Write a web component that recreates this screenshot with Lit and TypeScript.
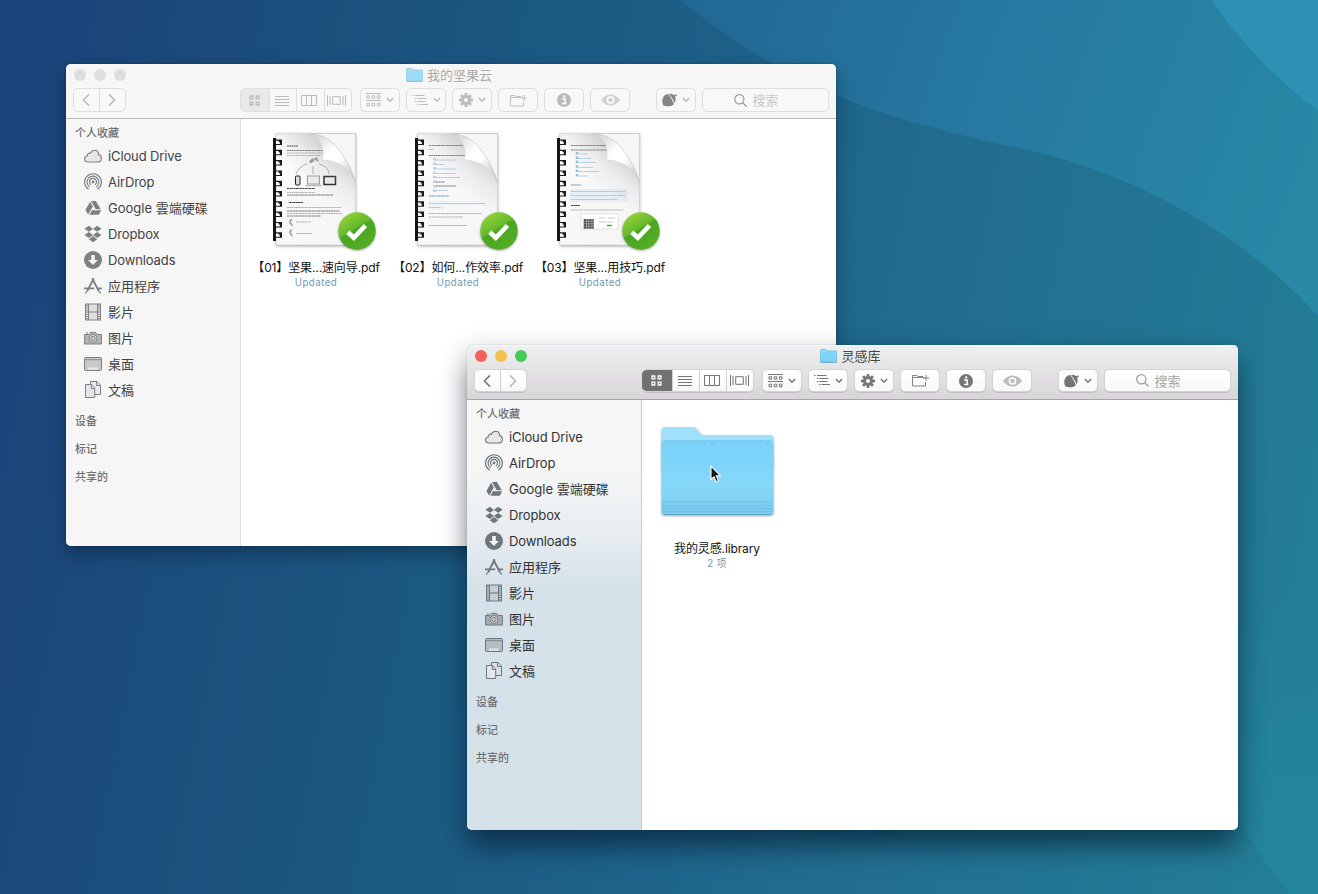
import { LitElement, html, svg, css, nothing } from "lit";
import { customElement, property } from "lit/decorators.js";
import { classMap } from "lit/directives/class-map.js";

/* ---------- toolbar glyphs ---------- */

const chevron = html`<svg width="8" height="6" viewBox="0 0 8 6"><path d="M.9 1 4 4.2 7.1 1" fill="none" stroke="currentColor" stroke-width="1.5"/></svg>`;

const glyphs = {
  back: html`<svg width="8" height="14" viewBox="0 0 8 14"><path d="M7 1.4 1.4 7 7 12.6" fill="none" stroke="currentColor" stroke-width="1.5"/></svg>`,
  forward: html`<svg width="8" height="14" viewBox="0 0 8 14"><path d="M1 1.4 6.6 7 1 12.6" fill="none" stroke="currentColor" stroke-width="1.5"/></svg>`,
  grid: html`<svg width="11" height="11" viewBox="0 0 11 11"><path d="M1 1h2.8v2.8H1zM7.2 1H10v2.8H7.2zM1 7.2h2.8V10H1zM7.2 7.2H10V10H7.2z" fill="none" stroke="currentColor" stroke-width="1.3"/></svg>`,
  list: html`<svg width="14" height="11" viewBox="0 0 14 11"><path d="M0 1.500h14M0 4.500h14M0 7.500h14M0 10.500h14" stroke="currentColor"/></svg>`,
  columns: html`<svg width="16" height="11" viewBox="0 0 16 11"><path d="M.5.5h15v10H.5zM5.5.5v10M10.5.5v10" fill="none" stroke="currentColor"/></svg>`,
  flow: html`<svg width="19" height="11" viewBox="0 0 19 11"><path d="M.5 0v11M3 1v9M5.7 1.7h7.6v7.6H5.7zM16 1v9M18.5 0v11" fill="none" stroke="currentColor"/></svg>`,
  arrange: html`<svg width="15" height="14" viewBox="0 0 15 14"><path d="M0 .5h15M0 7.5h15M1 2.8h2.6v2.4H1zM6.2 2.8h2.6v2.4H6.2zM11.4 2.8H14v2.4h-2.6zM1 10.2h2.6v2.6H1zM6.2 10.2h2.6v2.6H6.2zM11.4 10.2H14v2.6h-2.6z" fill="none" stroke="currentColor"/></svg>`,
  outline: html`<svg width="16" height="11" viewBox="0 0 16 11"><path d="M0 .5h1.5M3 .5h9.5M3 3.5h1.5M5.5 3.5h9M3 6.5h1.5M5.5 6.5h8M5 9.5h1.5M7.5 9.5H16" stroke="currentColor"/></svg>`,
  gear: html`<svg width="14" height="14" viewBox="-7 -7 14 14"><g fill="currentColor">${[0, 45, 90, 135].map(
    (a) => svg`<rect x="-1.4" y="-7" width="2.8" height="14" rx=".5" transform="rotate(${a})"/>`,
  )}</g><circle r="3.5" fill="none" stroke="currentColor" stroke-width="2.6"/><circle class="hub" r="2"/></svg>`,
  folder: html`<svg width="17" height="13" viewBox="0 0 17 13"><path d="M12 3.5H.5v8.500h13V8M.5 3.500V1.500h4.200l1.300 1h5M14 1v6M11 4h6" fill="none" stroke="currentColor" stroke-width=".9"/></svg>`,
  info: html`<svg width="14" height="14" viewBox="0 0 14 14"><circle cx="7" cy="7" r="7" fill="currentColor"/><path d="M5.100 6h3v4.200M5 10.400h4.300" fill="none" stroke="#fff" stroke-width="1.500"/><circle cx="7.200" cy="3.500" r="1.150" fill="#fff"/></svg>`,
  eye: html`<svg width="19" height="12" viewBox="0 0 19 12"><path d="M0 6Q4 .5 9.500 .5T19 6Q15 11.500 9.500 11.500T0 6z" fill="currentColor"/><circle cx="9.500" cy="6" r="3.100" fill="none" stroke="#fff" stroke-width="1.500"/></svg>`,
  acorn: html`<svg width="15" height="14" viewBox="0 0 15 14"><path d="M1.400 12.600C-1 8 .6 1.600 6 1.100 8.500 4.200 10.700 7.500 11.900 11.200 9 13.600 4.600 13.900 1.400 12.600z" fill="currentColor"/><path d="M6.900 1C8.700.3 10.400.7 11.500 1.900L14.600 1.500V3.100L13.100 3.600C14 6 13.700 8.400 12.600 10.300 11.400 6.800 9.500 3.800 6.900 1z" fill="currentColor"/></svg>`,
  search: html`<svg width="13" height="13" viewBox="0 0 13 13"><circle cx="5.300" cy="5.300" r="4.600" fill="none" stroke="currentColor" stroke-width="1.200"/><path d="M8.600 8.600 12.500 12.500" stroke="currentColor" stroke-width="1.300"/></svg>`,
};

const titleFolder = html`<svg width="17" height="14" viewBox="0 0 17 14"><path d="M.5 1.200Q.5.500 1.200.500H5.500L7 2h9q.5 0 .5.700V13H.5z" fill="#8fd8f7" stroke="#6dbbe0" stroke-width=".8"/><path d="M.9 3.500h15.200v9.300H.9z" fill="#7fd3f8"/><path d="M.5 13.300h16" stroke="#5d9fc4" stroke-width=".9"/></svg>`;

/* ---------- sidebar glyphs ---------- */

const places = [
  {
    label: "iCloud Drive",
    icon: svg`<path d="M4.300 15C2 15 .6 13.700.6 12S1.700 9.300 3.100 9C3 6.900 4.800 5.700 6.400 6.300 7 4.200 8.700 3.200 10.500 3.200c2.600 0 4.100 2 4.100 4.400C16.500 8 17.400 9.600 17.400 11.400c0 2.100-1.500 3.600-3.600 3.600z" fill="#8882" stroke="currentColor" stroke-width="1.100"/>`,
  },
  {
    label: "AirDrop",
    icon: svg`<g fill="none" stroke="currentColor" stroke-width="1.200"><path d="M4.600 16.300a8.400 8.400 0 1 1 8.800 0"/><path d="M5.700 13.900a5.900 5.900 0 1 1 6.600 0"/><path d="M7 11.700a3.500 3.500 0 1 1 4 0"/></g><circle cx="9" cy="9" r="1.400" fill="currentColor"/>`,
  },
  {
    label: "Google 雲端硬碟",
    icon: svg`<g fill="currentColor"><path d="M6.100 2.700 8.800 7.400 4.200 15.400 1.400 10.900z"/><path d="M7 2h5l4.700 8.300H11.700z"/><path d="M7.900 11.300h9.300l-2.500 4.500H5.300z"/></g>`,
  },
  {
    label: "Dropbox",
    icon: svg`<path d="M4.900.800.4 3.800 4.900 6.800 9 3.900zM13.100.800 9 3.900 13.100 6.800 17.600 3.800zM4.900 6.900.4 9.900 4.900 12.900 9 9.900zM13.100 6.900 9 9.900 13.100 12.900 17.600 9.900zM9 11 4.700 14.200 9 17.200 13.300 14.200z" fill="currentColor"/>`,
  },
  {
    label: "Downloads",
    icon: svg`<circle cx="9" cy="9" r="9" fill="currentColor"/><path d="M7.200 4h3.600v5h3.100L9 14 4.100 9h3.100z" fill="#f6f6f6"/>`,
  },
  {
    label: "应用程序",
    icon: svg`<g fill="none" stroke="currentColor"><path d="M9.700 1.500 3 14.500M8.300 1.500 15 14.500" stroke-width="1.800"/><path d="M0 11.300h10.200M13 11.300h5" stroke-width="1.700"/><path d="M2.500 14.500 1.300 16.500M15.500 14.500 16.700 16.500" stroke-width="1.400"/></g>`,
  },
  {
    label: "影片",
    icon: svg`<rect x="1.500" y="1" width="15" height="16" fill="#8883" stroke="currentColor"/><path d="M4.500 1v16M13.500 1v16M4.500 9h9" stroke="currentColor"/><path d="M3 2v15M15 2v15" stroke="currentColor" stroke-width="1.600" stroke-dasharray="1 1.200"/>`,
  },
  {
    label: "图片",
    icon: svg`<path d="M.6 5.500h4.200L6.500 3.400h5l1.700 2.100h4.200V15H.6z" fill="#8889" stroke="currentColor"/><path d="M2 4h2" stroke="currentColor"/><circle cx="9" cy="9.500" r="4" fill="#e4e6e8" stroke="currentColor"/><circle cx="9" cy="9.500" r="2.200" fill="#aaa8" stroke="currentColor" stroke-width=".9"/>`,
  },
  {
    label: "桌面",
    icon: svg`<rect x=".5" y="2.500" width="17" height="13" rx="1" fill="#8886" stroke="currentColor"/><path d="M1 4.700h16" stroke="currentColor" stroke-width=".8"/><path d="M4.300 13.700h9.400" stroke="#f5f6f7" stroke-width="2.200" stroke-dasharray="1.700 .7"/>`,
  },
  {
    label: "文稿",
    icon: svg`<g fill="#ddd8" stroke="currentColor"><path d="M6.500.500h6.700l3.300 3.600V13.500h-10z"/><path d="M12.500.500v4h4"/><path d="M1.500 3.500h6l3.200 3.600V16.500H1.500z" fill="#e4e7e9"/><path d="M7.300 3.500v4h3.400"/></g>`,
  },
];

const sections = ["设备", "标记", "共享的"];

/* Han glyphs sit lower in the line box than Latin ones */
const hasHan = (text: string) => /[\u4e00-\u9fff]/.test(text);

/* ---------- document thumbnails ---------- */

type Line = [x: number, y: number, w: number, tone?: string];

const ink = "#666";
const blue = "#9dc3df";

const pages: Record<string, { lines: Line[]; extra: unknown }> = {
  guide: {
    lines: [
      [31, 18, 11, "#222"], [73, 18, 15], [31, 22.500, 36, ink], [31, 25, 52], [31, 27.500, 34],
      [31, 60.500, 28, "#333"], [31, 64.500, 28], [31, 67, 46, ink], [33, 74.500, 14, "#222"],
      [31, 79.500, 54], [31, 83, 53, ink], [31, 85.500, 55], [31, 88, 34, ink],
      [40, 94, 15], [40, 105.500, 16],
    ],
    extra: svg`
      <path d="m53 33 4-3 1.500 3-4 2.500zM57 31l4-2 2 5" fill="#999"/>
      <g fill="none" stroke="#999" stroke-width=".8"><path d="M51 36Q43 38 40 46M57 38v8M63 36q9 2 10 10"/></g>
      <rect x="39.500" y="48" width="4.500" height="9" rx="1" fill="#ddd" stroke="#222"/>
      <rect x="51.500" y="48" width="12" height="8" fill="#eee" stroke="#999"/><path d="M49.500 57.500h16" stroke="#bbb" stroke-width="1.500"/>
      <rect x="68" y="48.500" width="11.500" height="8" fill="#eee" stroke="#222" stroke-width="1.500"/>
      <path d="M36 91.500q-3 1-1.500 3.500t2 2.500M36 102q-3 1-1.500 3.500t2 2.500" fill="none" stroke="#999" stroke-width="1.500"/>`,
  },
  team: {
    lines: [
      [31, 17.500, 34, ink], [31, 21.500, 4], [31, 27.500, 36, ink],
      [38, 32, 20, blue], [38, 36.500, 9, blue], [38, 41, 20, blue], [38, 45.500, 19, blue], [38, 49.500, 24, blue],
      [38, 54, 9, ink], [38, 58, 20, ink], [38, 62.500, 12, blue],
      [31, 68, 20, "#5592bf"], [31, 75.500, 56, blue], [31, 79.500, 12, blue],
      [31, 85.500, 53], [31, 89, 34], [31, 97.500, 38],
    ],
    extra: svg`<path d="M36.500 30v34" stroke="#b9d5e8" stroke-width="3" stroke-dasharray="2.500 2"/><path d="M30 73h58v4H46v5H30z" fill="#d7e8f344"/><rect x="72" y="18" width="6" height="8" fill="none" stroke="#aaa"/>`,
  },
  tips: {
    lines: [
      [31, 17.500, 38, ink], [31, 22, 42, ink],
      [39, 26, 9, blue], [39, 30.500, 12, blue], [39, 34.500, 17, blue], [39, 39.500, 14, blue], [39, 43.500, 20, blue], [39, 48, 9, blue],
      [31, 57, 10, "#4d8fbd"], [31, 63.500, 54, blue], [31, 67.500, 54, blue], [31, 71.500, 46, blue],
      [31, 77.500, 9, "#222"], [31, 82, 52],
    ],
    extra: svg`
      <path d="M37 24v26" stroke="#8ebbdc" stroke-width="2.500" stroke-dasharray="2.500 1.900"/>
      <rect x="29.500" y="61" width="58" height="13" fill="#cfe3f166"/>
      <rect x="41" y="86" width="37" height="15" fill="#fff" stroke="#ddd" stroke-width=".8"/>
      <rect x="43.500" y="91" width="10.500" height="10" fill="#999"/>
      <path d="M44 92h10M44 94.500h10M44 97h10M44 99.500h10" stroke="#444" stroke-width="1.500" stroke-dasharray="2 1 1 1.300"/>
      <path d="M59 90h6M59 94h8M68 90h7M68 94h5" stroke="#bbb" stroke-width=".8"/><path d="M67 97.500h5" stroke="#54a53c" stroke-width="1.500"/>`,
  },
};

const documentArt = (kind: string) => html`<svg class="art" width="120" height="124" viewBox="0 0 120 124">
  <defs>
    <linearGradient id="paper" x1="0" y1="0" x2="1" y2="1"><stop offset="0" stop-color="#fff"/><stop offset=".45" stop-color="#f7f7f7"/><stop offset="1" stop-color="#f5f5f5"/></linearGradient>
    <linearGradient id="shade" gradientUnits="userSpaceOnUse" x1="56" y1="58" x2="79" y2="28"><stop offset="0" stop-color="#bbb" stop-opacity="0"/><stop offset=".5" stop-color="#bbb" stop-opacity=".3"/><stop offset="1" stop-color="#999" stop-opacity=".7"/></linearGradient>
    <linearGradient id="curl" gradientUnits="userSpaceOnUse" x1="54" y1="6" x2="99" y2="54"><stop offset="0" stop-color="#ccc"/><stop offset=".3" stop-color="#f2f2f2"/><stop offset=".42" stop-color="#fff"/><stop offset=".58" stop-color="#fff"/><stop offset=".78" stop-color="#dedede"/><stop offset="1" stop-color="#c4c4c4"/></linearGradient>
    <linearGradient id="go" x1="0" y1="0" x2=".6" y2="1"><stop offset="0" stop-color="#a3d93c"/><stop offset=".5" stop-color="#66b92c"/><stop offset=".55" stop-color="#4ba522"/><stop offset="1" stop-color="#55ad25"/></linearGradient>
  </defs>
  <path class="sheet" d="M20 5.500H99.500V117H20z" fill="url(#paper)" stroke="#ccc" stroke-width=".6"/>
  ${pages[kind].extra}
  ${pages[kind].lines.map(([x, y, w, tone]) => svg`<path d="M${x} ${y}h${w}" stroke=${tone ?? "#aaa"} stroke-width=".9" stroke-dasharray="2.200 .4 1.500 .3"/>`)}
  <path d="M20 6H99V116H20z" fill="url(#shade)" opacity=".55"/>
  <path d="M53 5.800C66 6 76 12 83 22 91 33 97 43 99.300 55V5.800z" fill="#f6f6f6"/>
  <path d="M53 5.800C63 8 69 17 67 31.500 81 32 94 40 99.300 55 97 43 91 33 83 22 76 12 66 6 53 5.800z" fill="url(#curl)"/>
  <path d="M53 5.800C66 6 76 12 83 22 91 33 97 43 99.300 55" fill="none" stroke="#c2c2c2" stroke-width=".6"/>
  <path d="M53 5.500H99.500V56" fill="none" stroke="#ccc" stroke-width=".8"/>
  <path d="M17 10h3v103h-3z" fill="#151515"/>
  ${Array.from({ length: 10 }, (_, i) => svg`<g transform="translate(20 ${11.500 + i * 10.300})"><path d="M0 0h6v5.500H0z" fill="#1b1b1b"/><path d="M0 1.200h2.600v1.300h1.200v2H0z" fill="#fff"/></g>`)}
  <g class="badge"><circle cx="101" cy="103" r="18.700" fill="url(#go)"/><path d="M91.800 104.300 97.800 109.800 109.500 97.500" fill="none" stroke="#fff" stroke-width="4.600"/></g>
</svg>`;

const folderArt = html`<svg class="art" width="120" height="124" viewBox="0 0 120 124">
  <defs><linearGradient id="front" x1="0" y1="0" x2="0" y2="1"><stop offset="0" stop-color="#7bd2f9"/><stop offset=".3" stop-color="#7dd4f9"/><stop offset=".6" stop-color="#88d8f9"/><stop offset="1" stop-color="#7ccbef"/></linearGradient></defs>
  <g class="badge"><path d="M4.500 22q0-4 4-4H36q2.500 0 4 2l3.500 4.500q1.500 1.500 4 1.500H113q3.500 0 3.500 3.500V60H4.500z" fill="#a0e0fc"/>
  <path d="M4.500 34q0-2.500 2.500-2.500H114q2.500 0 2.500 2.500v68.500q0 3.500-3.500 3.500H8q-3.500 0-3.500-3.500z" fill="url(#front)"/></g>
  <path d="M7 32h107" stroke="#68bde5" stroke-width=".7"/><path d="M46 35h3M54 35h4M109 35h3" stroke="#5cafdb" stroke-width=".6"/>
  <path d="M5 93h111M5 96.500h111M5 99.500h111M5 102.500h111" stroke="#67bce3" stroke-width=".7"/><path d="M7 105.500h107" stroke="#60a9ca"/>
</svg>`;

interface Item {
  kind: string;
  name: string;
  note: string;
}

@customElement("finder-window")
class FinderWindow extends LitElement {
  @property() heading = "";
  @property({ type: Boolean, reflect: true }) active = false;
  @property({ attribute: false }) items: Item[] = [];

  static styles = css`
    :host {
      display: flex;
      flex-direction: column;
      box-sizing: border-box;
      overflow: hidden;
      border-radius: 5px;
      background: #fff;
      font-family: Inter, "Noto Sans CJK SC", sans-serif;
      box-shadow: 0 8px 18px rgba(0, 20, 40, 0.4), 0 0 2px rgba(0, 0, 0, 0.35);
      --glyph: #bbb;
      --edge: #dedede;
      --key: #f8f8f8;
    }
    :host([active]) {
      box-shadow: 0 20px 26px -3px rgba(0, 20, 35, 0.5), 0 6px 28px rgba(0, 20, 35, 0.2), 0 0 1px rgba(0, 0, 0, 0.45);
      --glyph: #757575;
      --edge: #d0d0d0;
      --key: #fdfdfd;
    }
    svg { display: block; flex: none; }
    .hub { fill: var(--key); }
    .chrome {
      flex: none;
      height: 55px;
      box-sizing: border-box;
      background: #f6f6f6;
      border-bottom: 1px solid #b9b9b9;
    }
    :host([active]) .chrome {
      background: linear-gradient(#eef0f2, #e9e8e9 28%, #d8d6d8);
      border-bottom-color: #a5a5a5;
      box-shadow: inset 0 1px #f8f8f8;
    }
    .titlebar {
      display: grid;
      grid-template-columns: 1fr auto 1fr;
      align-items: center;
      height: 22px;
      margin-bottom: 2px;
      padding: 0 12px 0 8px;
    }
    .lights { display: flex; gap: 8px; }
    .light { width: 12px; height: 12px; border-radius: 50%; background: #dedede; }
    :host([active]) .close { background: #f2605b; }
    :host([active]) .min { background: #f5bf4f; }
    :host([active]) .max { background: #46c95a; }
    .title { display: flex; align-items: center; gap: 4px; font-size: 13px; line-height: 20px; color: #aaa; }
    :host([active]) .title { color: #444; }
    :host(:not([active])) .title svg { opacity: 0.75; }
    .tools { display: flex; height: 24px; padding: 0 7px; }
    .key, .search, .group {
      box-sizing: border-box;
      display: flex;
      align-items: center;
      justify-content: center;
      height: 24px;
      border: 1px solid var(--edge);
      border-radius: 5px;
      background: var(--key);
      color: var(--glyph);
    }
    :host([active]) .key, :host([active]) .search, :host([active]) .group {
      background: linear-gradient(#fff, #f8f8f8);
      box-shadow: 0 1px #c1bfc1;
      border-color: #d4d2d4;
      height: 23px;
    }
    .group { overflow: hidden; }
    .cell { flex: 1; box-sizing: border-box; height: 100%; padding-right: 2px; display: flex; align-items: center; justify-content: center; border-left: 1px solid var(--edge); }
    .cell:first-child { border-left: 0; }
    .nav { width: 53px; margin-right: 114px; }
    :host([active]) .nav { margin-right: 115px; }
    .off { opacity: 0.5; }
    :host(:not([active])) .off { opacity: 1; }
    .views { width: 112px; margin-right: 8px; }
    .views .on { flex: none; width: 28px; background: #e9e9e9; padding-right: 1px; }
    :host([active]) .views { border-left: 0; }
    :host([active]) .views .on { width: 30px; height: 24px; background: #717171; color: #fff; }
    .key { width: 40px; margin-right: 6px; gap: 5px; }
    .acorn { margin-left: 20px; }
    :host(:not([active])) .acorn svg:first-child { color: #858585; }
    .key.eye { color: #bdbdbd; }
    :host(:not([active])) .key.eye { color: #d2d2d2; }
    .search { width: 127px; gap: 5px; font-size: 13px; line-height: 20px; color: #c9c9c9; padding-right: 18px; }
    :host([active]) .search { color: #a5a5a5; }
    .search svg { color: #999; }
    .body { flex: 1; min-height: 0; display: flex; }
    .side {
      flex: none;
      width: 175px;
      box-sizing: border-box;
      padding-top: 4px;
      background: #f6f6f6;
      border-right: 1px solid #dcdcdc;
      color: #444;
    }
    :host([active]) .side {
      background: linear-gradient(#f6f6f6 16%, #e9eef1 30%, #d6e2ea 43%, #d5e1e9);
      border-right-color: #c3cdd3;
      color: #333;
    }
    .head { padding-left: 9px; font-size: 11px; font-weight: 500; line-height: 28px; color: #6d6f70; }
    .first { line-height: 20px; }
    .more { padding-top: 4px; }
    .place { display: flex; align-items: center; gap: 6px; height: 26px; padding-left: 18px; font-size: 13px; letter-spacing: -0.12px; white-space: nowrap; }
    .han { margin-top: -2px; letter-spacing: 0; }
    .place svg { color: #7e8183; }
    :host([active]) .place svg { color: #6e767b; }
    .files { flex: 1; display: flex; align-items: flex-start; padding: 9px 0 0 4px; }
    .file { width: 142px; display: flex; flex-direction: column; align-items: center; }
    .thumb { position: relative; }
    .art { overflow: visible; }
    .sheet { filter: drop-shadow(0 1.5px 1.5px rgba(0, 0, 0, 0.35)); }
    .badge { filter: drop-shadow(0 1px 1px rgba(0, 0, 0, 0.35)); }
    .name { margin-top: 8px; font-size: 12px; line-height: 16px; letter-spacing: -0.12px; color: #111; white-space: nowrap; }
    .note { margin-top: 1px; font-size: 9.7px; line-height: 12px; letter-spacing: 0.45px; color: #7399b5; }
    .pointer { position: absolute; left: 53px; top: 56px; }
  `;

  render() {
    const cell = (name: keyof typeof glyphs, cls = "") => html`<span class="cell ${cls}">${glyphs[name]}</span>`;
    const key = (name: keyof typeof glyphs, menu = false, cls = "") => html`<span class="key ${cls}">${glyphs[name]}${menu ? chevron : nothing}</span>`;
    return html`
      <header class="chrome">
        <div class="titlebar">
          <div class="lights"><span class="light close"></span><span class="light min"></span><span class="light max"></span></div>
          <div class="title">${titleFolder}<span>${this.heading}</span></div>
        </div>
        <div class="tools">
          <div class="group nav">${cell("back")}<span class="cell"><span class="off">${glyphs.forward}</span></span></div>
          <div class="group views">${cell("grid", "on")}${cell("list")}${cell("columns")}${cell("flow")}</div>
          ${key("arrange", true)}${key("outline", true)}${key("gear", true)}${key("folder")}${key("info")}${key("eye", false, "eye")}
          ${key("acorn", true, "acorn")}
          <div class="search">${glyphs.search}<span>搜索</span></div>
        </div>
      </header>
      <div class="body">
        <nav class="side">
          <div class="head first">个人收藏</div>
          ${places.map(
            (p) => html`<div class="place">
              <svg width="18" height="18" viewBox="0 0 18 18">${p.icon}</svg>
              <span class=${classMap({ han: hasHan(p.label) })}>${p.label}</span>
            </div>`,
          )}
          <div class="more">${sections.map((s) => html`<div class="head">${s}</div>`)}</div>
        </nav>
        <main class="files">
          ${this.items.map(
            (f) => html`<div class="file">
              <div class="thumb">
                ${f.kind === "folder" ? folderArt : documentArt(f.kind)}
                ${f.kind === "folder"
                  ? html`<svg class="pointer" width="12" height="19" viewBox="0 0 12 19"><path d="M1 1v13.500l3-2.700 2.200 5 2.300-1-2.200-4.900H10.500z" fill="#111" stroke="#fff" stroke-width="1.100"/></svg>`
                  : nothing}
              </div>
              <div class="name">${f.name}</div>
              <div class="note">${f.note}</div>
            </div>`,
          )}
        </main>
      </div>
    `;
  }
}

@customElement("app-root")
class AppRoot extends LitElement {
  static styles = css`
    :host { display: block; position: relative; width: 1318px; height: 894px; overflow: hidden; }
    .wallpaper { display: block; }
    finder-window { position: absolute; }
    .cloud { left: 66px; top: 64px; width: 770px; height: 482px; }
    .library { left: 467px; top: 345px; width: 771px; height: 485px; }
  `;

  docs: Item[] = [
    { kind: "guide", name: "【01】坚果...速向导.pdf", note: "Updated" },
    { kind: "team", name: "【02】如何...作效率.pdf", note: "Updated" },
    { kind: "tips", name: "【03】坚果...用技巧.pdf", note: "Updated" },
  ];

  folders: Item[] = [{ kind: "folder", name: "我的灵感.library", note: "2 项" }];

  render() {
    return html`
      <svg class="wallpaper" width="1318" height="894" viewBox="0 0 1318 894">
        <defs>
          <linearGradient id="sea" gradientUnits="userSpaceOnUse" x1="0" y1="300" x2="1318" y2="560">
            <stop offset="0" stop-color="#1b447a"/><stop offset=".28" stop-color="#1b557f"/><stop offset=".5" stop-color="#1d6088"/><stop offset=".7" stop-color="#226e90"/><stop offset="1" stop-color="#237d96"/>
          </linearGradient>
          <linearGradient id="band" gradientUnits="userSpaceOnUse" x1="680" y1="0" x2="1318" y2="230">
            <stop offset="0" stop-color="#216793"/><stop offset=".45" stop-color="#2678a0"/><stop offset="1" stop-color="#2889a6"/>
          </linearGradient>
          <linearGradient id="shore" x1="0" y1="0" x2="0" y2="1">
            <stop offset="0" stop-color="#24899c" stop-opacity="0"/><stop offset=".7" stop-color="#24899c" stop-opacity=".6"/><stop offset="1" stop-color="#24899c" stop-opacity=".75"/>
          </linearGradient>
        </defs>
        <path d="M0 0h1318v894H0z" fill="url(#sea)"/>
        <path d="M680 0C725 35 765 65 836 95 900 122 960 135 1040 153 1150 180 1255 245 1318 316V0z" fill="url(#band)"/>
        <path d="M1212 0C1240 42 1275 78 1318 111V0z" fill="#2d91b5"/>
        <path d="M1150 600Q1210 800 1290 894h28V600z" fill="url(#shore)"/>
      </svg>
      <finder-window class="cloud" heading="我的坚果云" .items=${this.docs}></finder-window>
      <finder-window class="library" heading="灵感库" active .items=${this.folders}></finder-window>
    `;
  }
}
